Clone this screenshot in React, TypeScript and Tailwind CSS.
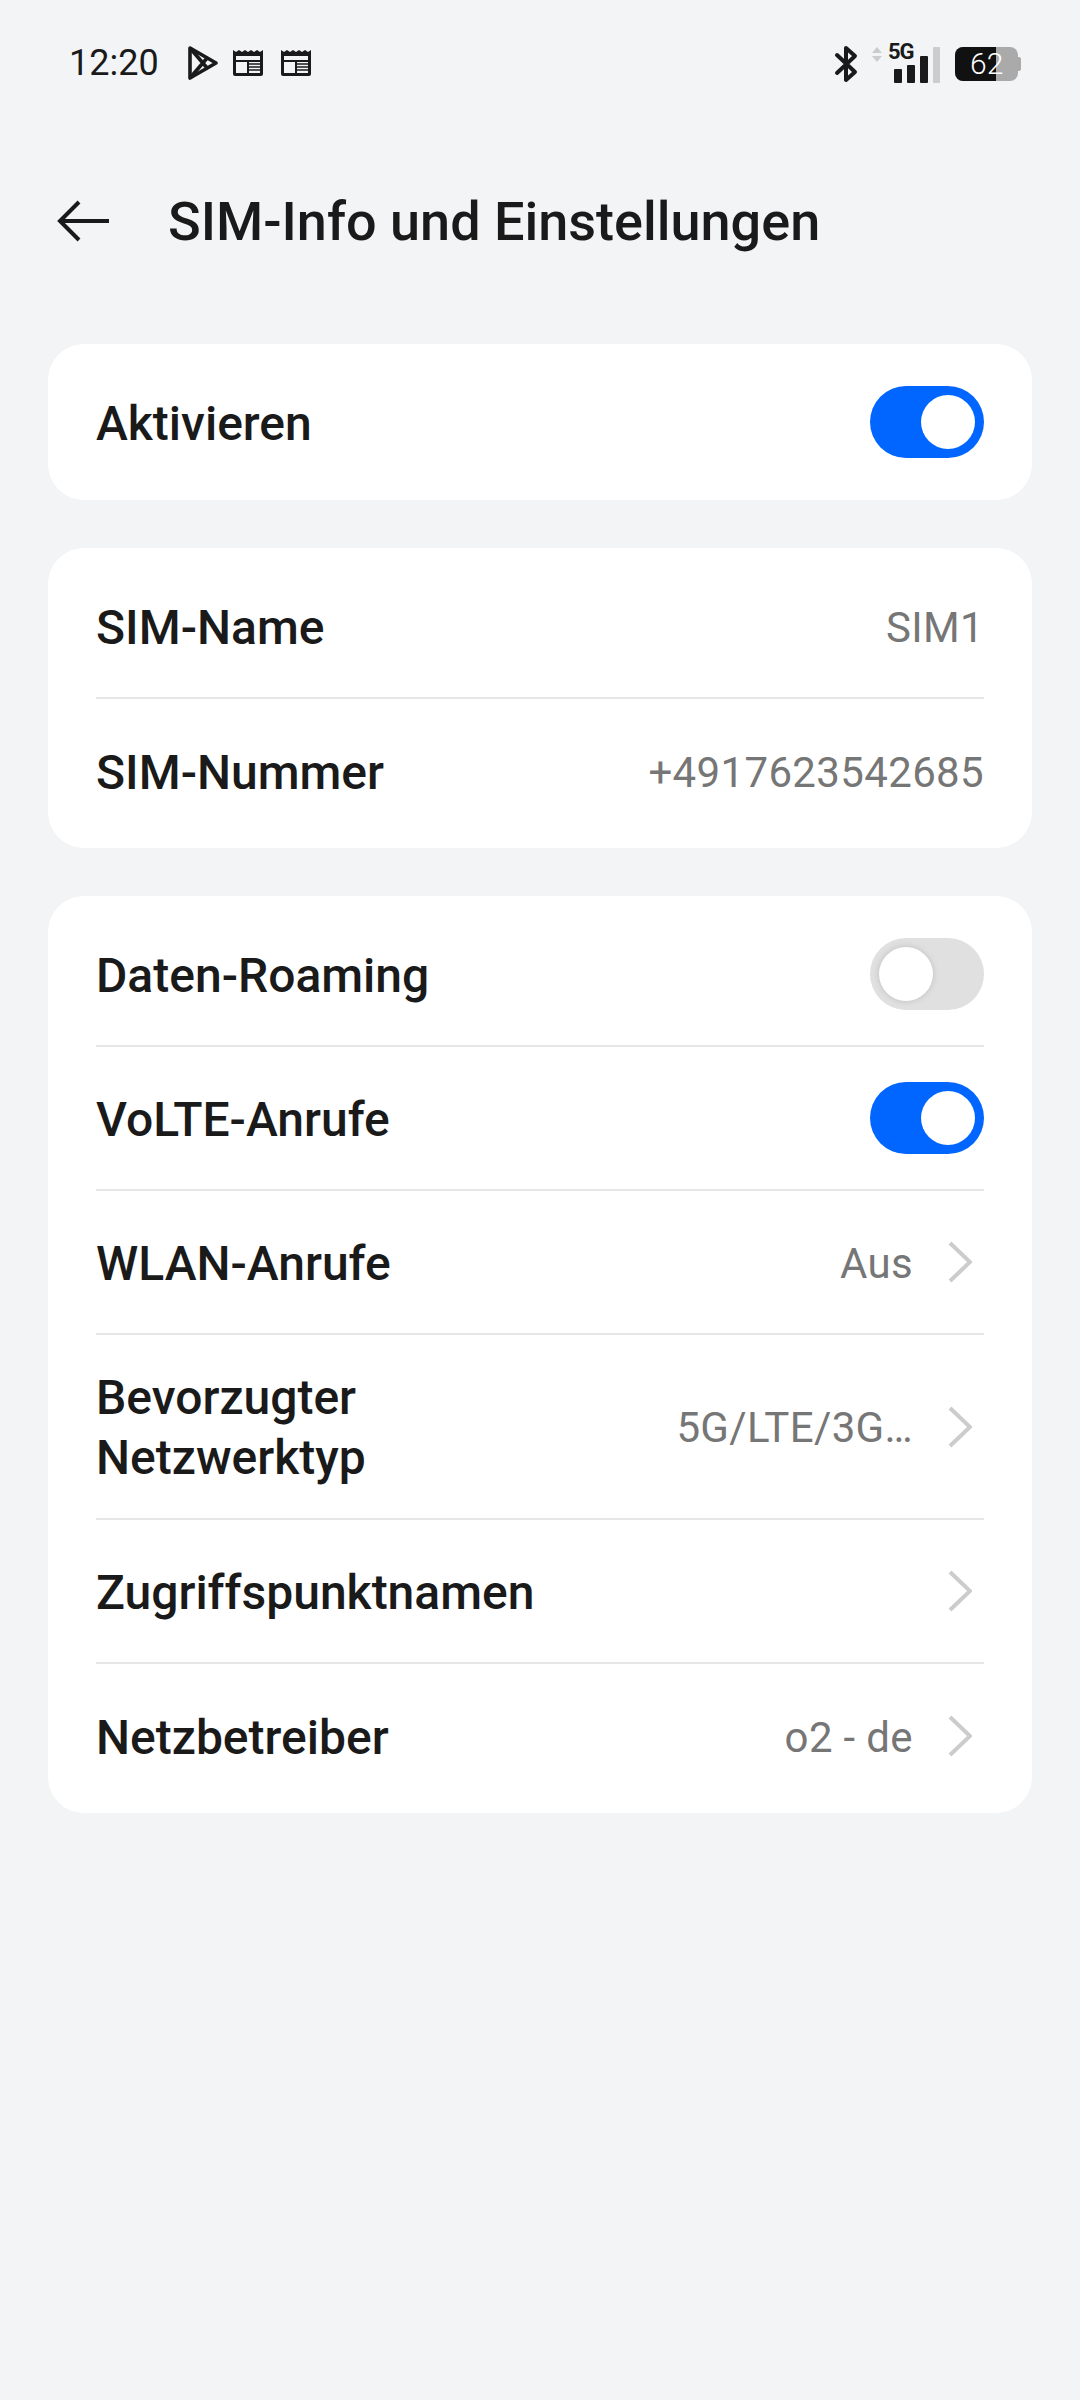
import { ReactNode } from "react";

const font = { fontFamily: "Roboto, sans-serif" };

function Toggle({ on }: { on: boolean }) {
  return (
    <div className={`w-[114px] h-[72px] rounded-full flex items-center px-[9px] ${on ? "bg-[#0066ff] justify-end" : "bg-[#e0e0e0] justify-start"}`}>
      <span className={`block w-[54px] h-[54px] rounded-full bg-white ${on ? "" : "shadow-[0_0_6px_rgba(0,0,0,0.15)]"}`} />
    </div>
  );
}

function Chevron() {
  return (
    <svg width="24" height="42" viewBox="0 0 24 42" fill="none" className="ml-[35px] mr-[12px] shrink-0">
      <path d="M2 2 L22 21 L2 40" stroke="#cccccc" strokeWidth="4" />
    </svg>
  );
}

function Row({ label, value, right, arrow, last, tall }: { label: ReactNode; value?: string; right?: ReactNode; arrow?: boolean; last?: boolean; tall?: boolean }) {
  return (
    <div className={`flex items-center justify-between ${tall ? "h-[185px]" : "h-[144px]"} ${last ? "" : "border-b-2 border-[#e6e6e6]"}`}>
      <div className="pt-[3px] text-[48px] leading-[60px] font-medium text-[#1a1a1a]">{label}</div>
      <div className="flex items-center">
        {value && <span className="pt-[2px] text-[42px] text-[#767676] tracking-[0.35px]">{value}</span>}
        {arrow && <Chevron />}
        {right}
      </div>
    </div>
  );
}

function Card({ children, className }: { children: ReactNode; className: string }) {
  return <div className={`bg-white rounded-[36px] px-[48px] ${className}`}>{children}</div>;
}

function PlayIcon() {
  return (
    <svg width="32" height="36" viewBox="0 0 32 36" fill="none" stroke="#1a1a1a" strokeWidth="3.6" strokeLinejoin="round">
      <path d="M3 3 L29 18 L3 33 Z" />
      <path d="M3 3 L21 24 M3 33 L21 12" />
    </svg>
  );
}

function NewsIcon() {
  return (
    <svg width="30" height="28" viewBox="0 0 30 28" fill="none">
      <path d="M0 1 L3 3 L6 1 L9 3 L12 1 L15 3 L18 1 L21 3 L24 1 L27 3 L30 1 V25 Q30 27 28 27 H2 Q0 27 0 25 Z" fill="#1a1a1a" />
      <rect x="3" y="7" width="24" height="17" fill="#f3f4f6" />
      <path d="M3 12 H27 M15 12 V24" stroke="#1a1a1a" strokeWidth="2" />
      <path d="M16 15 H27 M16 18 H27 M16 21 H27" stroke="#1a1a1a" strokeWidth="1.5" />
    </svg>
  );
}

function BluetoothIcon() {
  return (
    <svg width="24" height="38" viewBox="0 0 24 38" fill="none" stroke="#1a1a1a" strokeWidth="4" strokeLinejoin="round" strokeLinecap="round" className="mr-[-2px]">
      <path d="M3 10 L21 27 L12 35 V3 L21 11 L3 28" />
    </svg>
  );
}

function Signal() {
  return (
    <div className="flex items-start">
      <svg width="12" height="16" viewBox="0 0 12 16" className="mr-[5px] mt-[1px]">
        <path d="M6 0 L11 6 H1 Z M6 15 L11 9 H1 Z" fill="#cccccc" />
      </svg>
      <div className="relative w-[52px] h-[37px]">
        <span className="absolute left-0 top-[-6px] text-[22px] leading-[24px] font-bold text-[#1a1a1a] tracking-[-1px]">5G</span>
        <div className="absolute inset-0 flex items-end gap-[5px] pl-[6px]">
          <span className="w-[8px] h-[14px] rounded-[1px] bg-[#1a1a1a]" />
          <span className="w-[8px] h-[18px] rounded-[1px] bg-[#1a1a1a]" />
          <span className="w-[8px] h-[27px] rounded-[1px] bg-[#1a1a1a]" />
          <span className="w-[7px] h-[36px] rounded-[1px] bg-[#cccccc]" />
        </div>
      </div>
    </div>
  );
}

function Battery() {
  return (
    <div className="relative flex items-center">
      <div className="relative w-[63px] h-[34px] rounded-[8px] bg-[#aaaaaa]">
        <div className="w-[41px] h-full rounded-l-[8px] bg-[#111111]" />
        <span className="absolute left-[15px] top-0 text-[30px] leading-[34px] text-white font-light">62</span>
      </div>
      <span className="w-[3px] h-[14px] rounded-r-[2px] bg-[#aaaaaa]" />
    </div>
  );
}

export default function App() {
  return (
    <div className="w-[1080px] h-[2400px] bg-[#f3f4f6] overflow-hidden" style={font}>
      {/* status bar */}
      <div className="h-[126px] flex items-start justify-between pl-[69px] pr-[59px] pt-[45px]">
        <div className="flex items-center">
          <span className="text-[36px] leading-[36px] text-[#1a1a1a] w-[118px]">12:20</span>
          <PlayIcon />
          <div className="ml-[14px] flex gap-[18px]"><NewsIcon /><NewsIcon /></div>
        </div>
        <div className="flex items-center gap-[15px]">
          <BluetoothIcon />
          <Signal />
          <Battery />
        </div>
      </div>

      {/* header */}
      <div className="h-[218px] flex items-start pl-[57px] pt-[74px]">
        <svg width="54" height="42" viewBox="0 0 54 42" fill="none" stroke="#1a1a1a" strokeWidth="4">
          <path d="M52 21 H3 M22 2 L3 21 L22 40" />
        </svg>
        <h1 className="ml-[57px] mt-[-8px] text-[54px] leading-[60px] font-medium text-[#1a1a1a]">SIM-Info und Einstellungen</h1>
      </div>

      <div className="mx-[48px] w-[984px] flex flex-col gap-[48px]">
        <Card className="pt-[6px] pb-[6px]">
          <Row label="Aktivieren" right={<Toggle on />} last />
        </Card>
        <Card className="pt-[7px] pb-[5px]">
          <Row label="SIM-Name" value="SIM1" />
          <Row label="SIM-Nummer" value="+4917623542685" last />
        </Card>
        <Card className="pt-[7px] pb-[5px]">
          <Row label="Daten-Roaming" right={<Toggle on={false} />} />
          <Row label="VoLTE-Anrufe" right={<Toggle on />} />
          <Row label="WLAN-Anrufe" value="Aus" arrow />
          <Row label={<>Bevorzugter<br />Netzwerktyp</>} value="5G/LTE/3G…" arrow tall />
          <Row label="Zugriffspunktnamen" arrow />
          <Row label="Netzbetreiber" value="o2 - de" arrow last />
        </Card>
      </div>
    </div>
  );
}
